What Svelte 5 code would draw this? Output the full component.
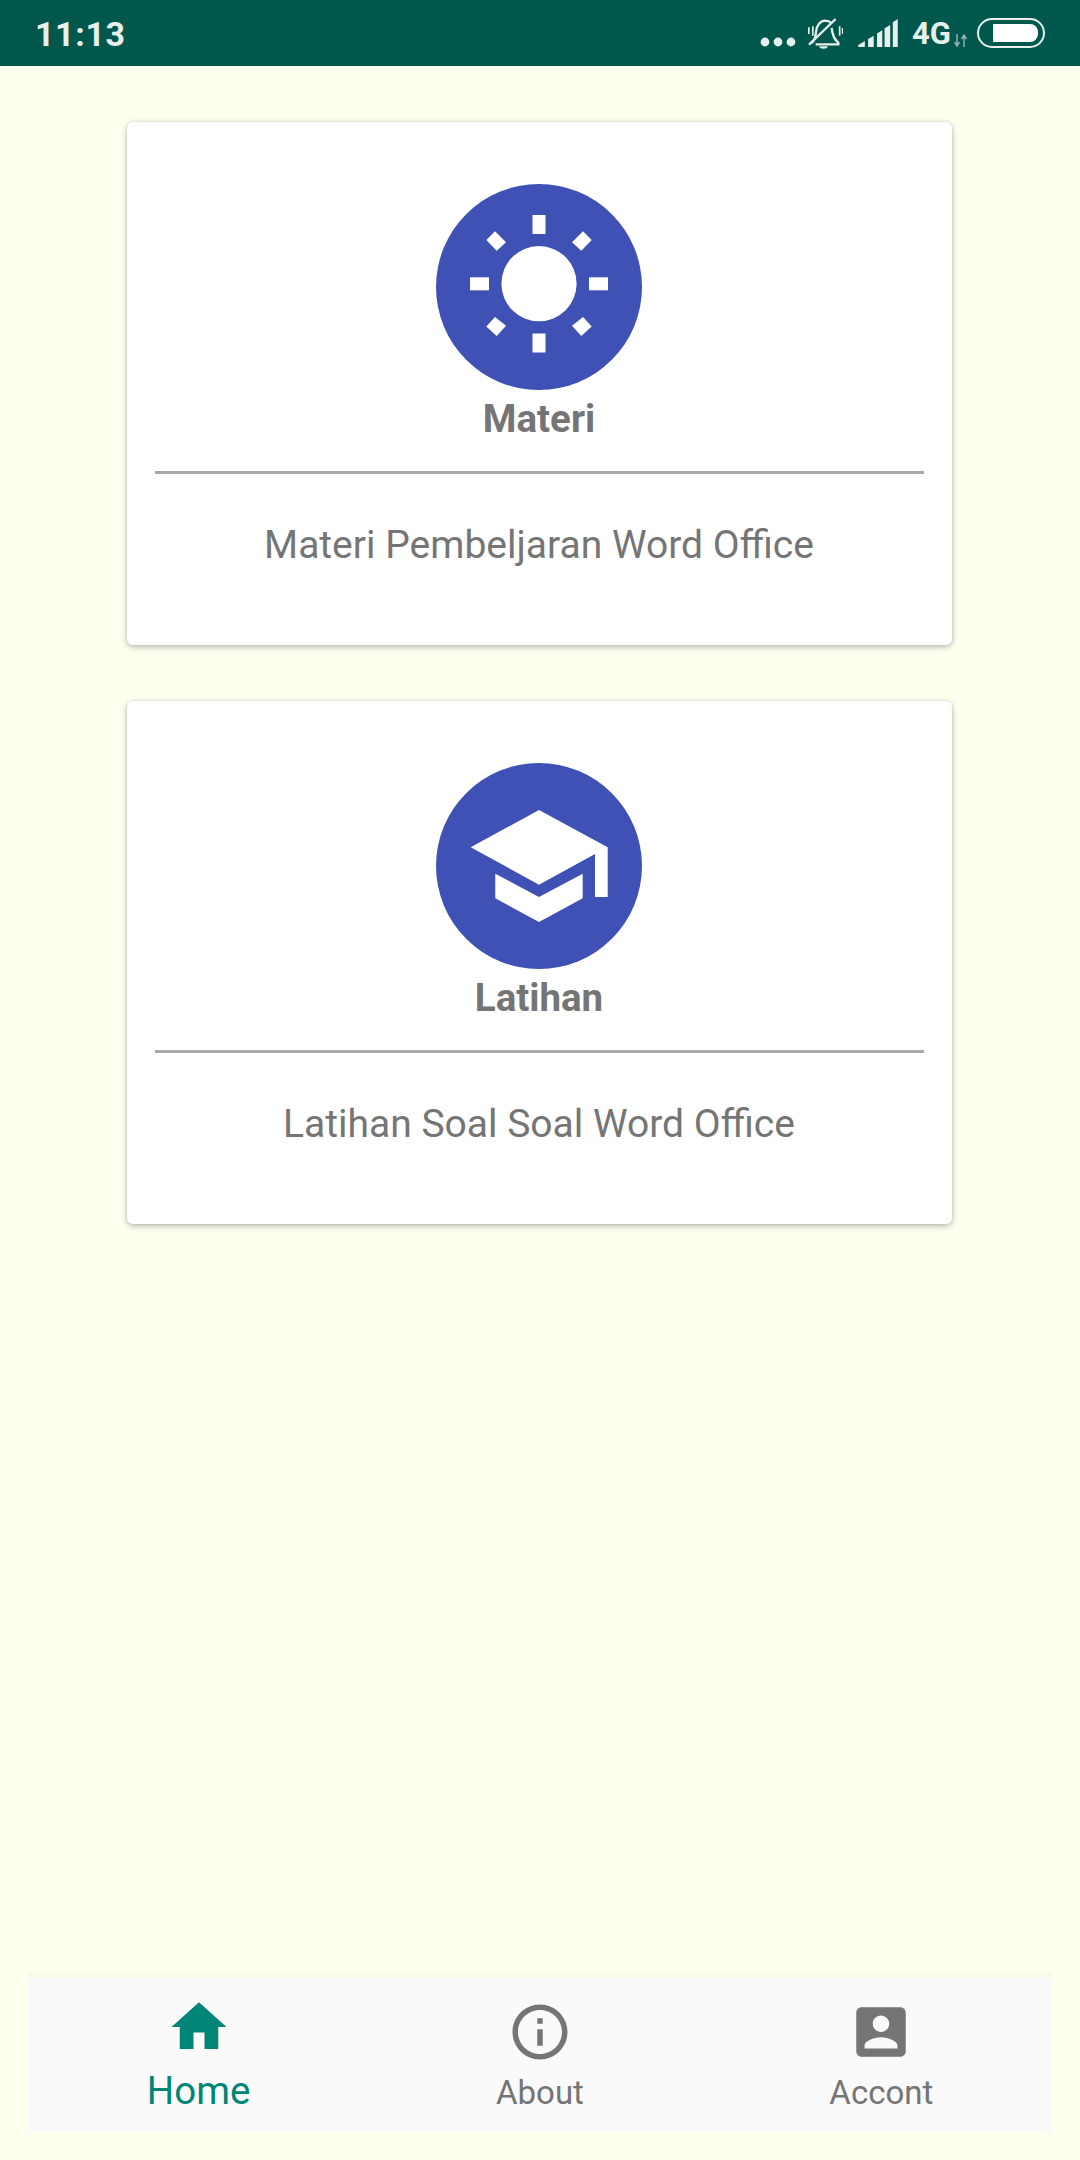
<script>
  const cards = [
    { title: 'Materi', desc: 'Materi Pembeljaran Word Office', kind: 'sun' },
    { title: 'Latihan', desc: 'Latihan Soal Soal Word Office', kind: 'cap' }
  ];
</script>

<div class="page">
  <header class="status">
    <span class="time">11:13</span>
    <div class="sys">
      <svg class="dots" width="36" height="12" viewBox="0 0 36 12"><circle cx="5" cy="6" r="4.400"/><circle cx="18" cy="6" r="4.400"/><circle cx="31" cy="6" r="4.400"/></svg>
      <svg class="bell" width="35" height="31" viewBox="25 22 105 93">
        <g fill="none" stroke="#e8f0ee" stroke-width="7">
          <path d="M36 97 C46 88 48 78 49 64 C50 44 62 31 76 30 C84 30 90 32 95 37"/>
          <path d="M96 52 C98 70 102 86 116 96 V101 H48"/>
          <path d="M28 102 L108 25"/>
          <path d="M27.500 50 V70 M39.500 47 V75 M120 47 V75 M129 52 V70" stroke-width="5"/>
        </g>
        <path d="M58 107 H85 C82 117 61 117 58 107z" fill="#e8f0ee"/>
      </svg>
      <svg class="signal" width="40" height="28" viewBox="175 25 120 85">
        <path d="M175 110 V104 L195 92 V110z M205 110 V86 L222 76 V110z M232 110 V69 L248 59 V110z M255 110 V53 L272 43 V110z M280 110 V35 L295 25 V110z"/>
      </svg>
      <span class="net">4G</span>
      <svg class="arrows" width="13" height="13" viewBox="0 0 13 13"><path d="M3 0v10M0.500 8l2.500 4 2.500-4M10 13V3M7.500 5l2.500-4 2.500 4" fill="none" stroke="#8fb3ab" stroke-width="1.500"/></svg>
      <div class="battery"><div class="level"></div></div>
    </div>
  </header>

  <main class="content">
    {#each cards as c}
      <section class="card">
        <svg class="badge" width="206" height="206" viewBox="0 0 206 206">
          <circle cx="103" cy="103" r="103" fill="#3f51b5"/>
          {#if c.kind === 'sun'}
            <g fill="#fff">
              <circle cx="103" cy="99.700" r="37.600"/>
              <rect x="96.500" y="31" width="13" height="19"/>
              <rect x="96.500" y="149.500" width="13" height="19"/>
              <rect x="34" y="93.300" width="19" height="13"/>
              <rect x="153" y="93.300" width="19" height="13"/>
              <polygon points="50.300,56 59,47.300 70,58.300 60.700,66.700"/>
              <polygon points="155.700,56 147,47.300 136,58.300 145.300,66.700"/>
              <polygon points="50.300,142.500 59,133 70,141.700 60.700,152"/>
              <polygon points="155.700,142.500 147,133 136,141.700 145.300,152"/>
            </g>
          {:else}
            <g fill="#fff">
              <polygon points="34.700,84.300 103,47 171.700,84.300 171.700,134 159,134 159,91 103,121.700"/>
              <polygon points="59.300,110.700 103,134 146.700,110.700 146.700,135.300 103,159 59.300,135.300"/>
            </g>
          {/if}
        </svg>
        <h2>{c.title}</h2>
        <hr />
        <p>{c.desc}</p>
      </section>
    {/each}
  </main>

  <nav class="tabs">
    <div class="tab active">
      <svg width="66" height="66" viewBox="0 0 24 24"><path d="M10 20v-6h4v6h5v-8h3L12 3 2 12h3v8z"/></svg>
      <span>Home</span>
    </div>
    <div class="tab">
      <svg width="66" height="66" viewBox="0 0 24 24"><path d="M11 7h2v2h-2zm0 4h2v6h-2zm1-9C6.480 2 2 6.480 2 12s4.480 10 10 10 10-4.480 10-10S17.520 2 12 2zm0 18c-4.410 0-8-3.590-8-8s3.590-8 8-8 8 3.590 8 8-3.590 8-8 8z"/></svg>
      <span>About</span>
    </div>
    <div class="tab">
      <svg width="66" height="66" viewBox="0 0 24 24"><path d="M3 5v14c0 1.100.890 2 2 2h14c1.100 0 2-.900 2-2V5c0-1.100-.900-2-2-2H5c-1.110 0-2 .900-2 2zm12 4c0 1.660-1.340 3-3 3s-3-1.340-3-3 1.340-3 3-3 3 1.340 3 3zm-9 8c0-2 4-3.100 6-3.100s6 1.100 6 3.100v1H6v-1z"/></svg>
      <span>Accont</span>
    </div>
  </nav>
</div>

<style>
  :global(body) { margin: 0; }
  .page {
    height: 2160px;
    display: flex;
    flex-direction: column;
    background: #fffff0;
    font-family: Roboto, "Liberation Sans", sans-serif;
    overflow: hidden;
  }
  .status {
    height: 66px;
    flex: none;
    background: #00574b;
    color: #e8f0ee;
    display: flex;
    align-items: center;
    justify-content: space-between;
    padding: 0 35px 0 35px;
    box-sizing: border-box;
  }
  .time { font-size: 34px; font-weight: 700; margin-top: 2px; letter-spacing: .6px; }
  .sys { display: flex; align-items: center; }
  .sys svg { fill: #e8f0ee; display: block; }
  .dots { margin-top: 18px; }
  .bell { margin-left: 12px; }
  .signal { margin-left: 15px; }
  .net { font-size: 31px; font-weight: 700; margin-left: 14px; }
  .arrows { margin-left: 3px; margin-top: 14px; }
  .battery {
    margin-left: 10px;
    width: 68px;
    height: 30px;
    box-sizing: border-box;
    border: 2.500px solid #e8f0ee;
    border-radius: 15px;
    padding: 4px 5px 4px 14px;
  }
  .level { height: 100%; background: #fff; border-radius: 1px 8px 8px 1px; }
  .content {
    flex: 1;
    padding-top: 56px;
    display: flex;
    flex-direction: column;
    align-items: center;
    gap: 56px;
  }
  .card {
    width: 825px;
    height: 523px;
    box-sizing: border-box;
    padding: 62px 28px 0;
    background: #fff;
    border-radius: 6px;
    box-shadow: 0 2px 6px rgba(0,0,0,.28), 0 0 3px rgba(0,0,0,.08);
    display: flex;
    flex-direction: column;
    align-items: center;
    margin-right: 1px;
  }
  .badge { display: block; flex: none; margin-right: 1px; }
  h2 {
    margin: 6px 1px 0 0;
    font-size: 38.500px;
    line-height: 45px;
    font-weight: 700;
    color: #757575;
  }
  hr {
    width: 100%;
    height: 3px;
    margin: 30px 0 0;
    border: 0;
    background: #a9a9a9;
  }
  p {
    margin: 49px 1px 0 0;
    font-size: 39px;
    line-height: 45px;
    color: #757575;
  }
  .tabs {
    flex: none;
    height: 154px;
    margin: 0 28px 28px;
    background: #fafafa;
    display: grid;
    grid-template-columns: repeat(3, 1fr);
    box-shadow: 0 -5px 0 rgba(0,0,0,.02);
  }
  .tab {
    display: flex;
    flex-direction: column;
    align-items: center;
    padding-top: 21px;
    color: #757575;
    fill: #757575;
    font-size: 33px;
    line-height: 39px;
  }
  .tab svg { display: block; }
  .tab span { margin-top: 8px; }
  .tab.active {
    color: #008577;
    fill: #008577;
    font-size: 38.500px;
    line-height: 45px;
    padding-top: 16px;
  }
</style>
